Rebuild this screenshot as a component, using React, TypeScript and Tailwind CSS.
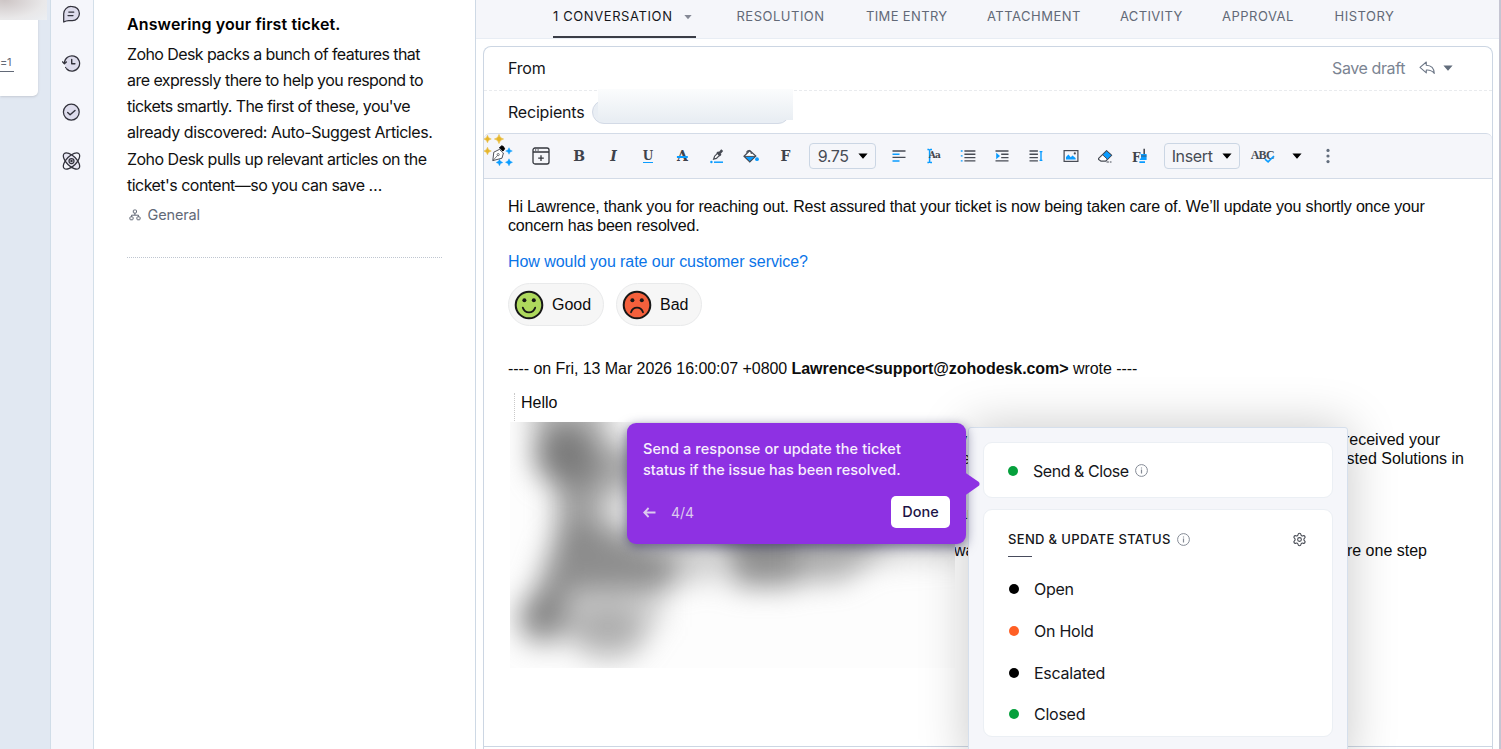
import type { ReactNode } from 'react';
import { clsx } from 'clsx';
import { Settings } from 'lucide-react';

const UI = 'font-[Inter,"Noto_Sans",sans-serif]';
const MAIL = 'font-["Liberation_Sans",Arial,sans-serif]';
const SLAB = 'font-["DejaVu_Serif",serif] font-bold text-[#3f434b]';

const tabs = [
  { label: 'RESOLUTION', className: 'w-[129.5px]' },
  { label: 'TIME ENTRY', className: 'w-[121px] tracking-[0.35px]' },
  { label: 'ATTACHMENT', className: 'w-[133px]' },
  { label: 'ACTIVITY', className: 'w-[102px] tracking-[0.35px]' },
  { label: 'APPROVAL', className: 'w-[112.5px]' },
  { label: 'HISTORY', className: 'w-[80px]' },
];

const articleLines = [
  { text: 'Zoho Desk packs a bunch of features that', className: 'tracking-[-0.59px]' },
  { text: 'are expressly there to help you respond to', className: 'tracking-[-0.54px]' },
  { text: "tickets smartly. The first of these, you've", className: 'tracking-[-0.57px]' },
  { text: 'already discovered: Auto-Suggest Articles.', className: 'tracking-[-0.45px]' },
  { text: 'Zoho Desk pulls up relevant articles on the', className: 'tracking-[-0.52px]' },
  { text: "ticket's content—so you can save …", className: 'tracking-[-0.53px]' },
];

const statuses = [
  { label: 'Open', dot: 'bg-black' },
  { label: 'On Hold', dot: 'bg-[#ff5f25]' },
  { label: 'Escalated', dot: 'bg-black' },
  { label: 'Closed', dot: 'bg-[#05a03c]' },
];

function Caret({ className }: { className?: string }) {
  return (
    <svg width="10" height="6" viewBox="0 0 10 6" className={clsx('shrink-0', className)}>
      <path d="M.4.5h9.2L5.5 5.3a.6.6 0 0 1-1 0z" fill="currentColor" />
    </svg>
  );
}

function InfoIcon() {
  return (
    <svg width="13" height="13" viewBox="0 0 13 13" fill="none" stroke="#858b96">
      <circle cx="6.5" cy="6.5" r="5.9" />
      <path d="M6.5 5.6v3.8M6.5 3.4v1.2" strokeWidth="1.2" />
    </svg>
  );
}

function RailIcon({ children }: { children: ReactNode }) {
  return (
    <svg
      width="19"
      height="19"
      viewBox="0 0 19 19"
      fill="none"
      stroke="#32323c"
      strokeWidth="1.25"
      strokeLinecap="round"
      strokeLinejoin="round"
    >
      {children}
    </svg>
  );
}

function SideRail() {
  return (
    <nav className="flex w-[43px] shrink-0 flex-col items-center gap-[30px] border-r border-[#d3dfe9] bg-[#f5f6fb] pr-[2px] pt-[4.5px]">
      <RailIcon>
        <path d="M1.7 17V8.8A7.4 7.4 0 0 1 9.2 1.5h1.2a7 7 0 0 1 0 14H6.6c-1.9 0-3.2.5-4.9 1.5z" fill="#dddcec" />
        <path d="M6.8 7.1h5M6 10.5h5" />
      </RailIcon>
      <RailIcon>
        <path d="M2.4 9.3a7.6 7.6 0 1 1 2.1 5.4" fill="#dddcec" />
        <path d="M.5 7.8l1.9 2 2-1.8" />
        <path d="M9.7 5.4v4.4h3.2" strokeWidth="1.4" />
        <path d="M3.6 13.4l.1.1M5.6 15.6l.1.1" />
      </RailIcon>
      <RailIcon>
        <circle cx="9.3" cy="9.1" r="7.9" fill="#dddcec" />
        <path d="M5.7 9.5l2.4 2.3 4.9-4.4" strokeWidth="1.4" />
      </RailIcon>
      <RailIcon>
        <ellipse cx="9.5" cy="9" rx="10.4" ry="5" transform="rotate(45 9.5 9)" fill="#dddcec" fillOpacity=".6" />
        <ellipse cx="9.5" cy="9" rx="10.4" ry="5" transform="rotate(-45 9.5 9)" />
        <circle cx="9.5" cy="9" r="2.5" />
        <circle cx="9.5" cy="9" r=".6" />
      </RailIcon>
    </nav>
  );
}

function ArticlePanel() {
  return (
    <section className="w-[381px] shrink-0 bg-white pl-[33px] pt-[11px]">
      <h2 className="h-[26px] whitespace-nowrap text-[16px] font-semibold leading-[26px] tracking-[0.13px] text-black">
        Answering your first ticket.
      </h2>
      <div className="mt-[4px] whitespace-nowrap text-[16px] leading-[26.15px] text-[#111]">
        {articleLines.map((line) => (
          <p key={line.text} className={line.className}>
            {line.text}
          </p>
        ))}
      </div>
      <div className="mt-[5.2px] flex h-6 items-center gap-[6.5px] pl-[2px] text-[#626977]">
        <svg width="12" height="12" viewBox="0 0 12 12" fill="none" stroke="currentColor">
          <rect x="4.3" y="1" width="3.2" height="3" rx=".8" />
          <rect x=".9" y="7.8" width="3.2" height="3" rx=".8" />
          <rect x="7.9" y="7.8" width="3.2" height="3" rx=".8" />
          <path d="M5.9 4v2.2M2.5 7.8V6.2h7v1.6" />
        </svg>
        <span className="text-[14.5px] tracking-[-0.15px]">General</span>
      </div>
      <div className="mt-[30px] w-[315px] border-t border-dotted border-[#bfc6d0]" />
    </section>
  );
}

function TabBar() {
  return (
    <header className="flex h-[39px] shrink-0 border-b-[1.5px] border-[#e8edf4] bg-[#f5f6fa] pl-[77px] text-[13px] tracking-[0.5px] text-[#626977]">
      <div className="mr-[40.5px] flex h-[38px] w-[143px] items-center justify-between border-b-2 border-[#3a3d46] pb-[3px] pr-[4px] text-[#15161a]">
        <span className="whitespace-nowrap tracking-[0.6px]">1 CONVERSATION</span>
        <Caret className="w-[8px] text-[#858995]" />
      </div>
      {tabs.map((tab) => (
        <span key={tab.label} className={clsx('flex h-[33px] items-center whitespace-nowrap', tab.className)}>
          {tab.label}
        </span>
      ))}
    </header>
  );
}

function Tool({ children }: { children: ReactNode }) {
  return <span className="flex w-[34.4px] shrink-0 items-center justify-center">{children}</span>;
}

function ToolSvg({ children }: { children: ReactNode }) {
  return (
    <svg width="16" height="16" viewBox="0 0 16 16" fill="none" stroke="#474b54" strokeWidth="1.4">
      {children}
    </svg>
  );
}

function Star({ x, y, r, fill }: { x: number; y: number; r: number; fill: string }) {
  return (
    <path
      transform={`translate(${x} ${y}) scale(${r})`}
      d="M0-1Q.15-.15 1 0Q.15.15 0 1Q-.15.15-1 0Q-.15-.15 0-1z"
      fill={fill}
      stroke={fill}
      strokeWidth=".12"
    />
  );
}

function SparklePen() {
  return (
    <svg width="30" height="34" viewBox="0 0 30 34" className="shrink-0 self-start">
      <Star x={3.5} y={5} r={3.8} fill="#e6b62c" />
      <Star x={15} y={5} r={4.6} fill="#e6b62c" />
      <Star x={3.5} y={17} r={3.8} fill="#e6b62c" />
      <Star x={25} y={17} r={3.3} fill="#0a9cff" />
      <Star x={15.5} y={28.5} r={3.3} fill="#0a9cff" />
      <Star x={25} y={28.3} r={3.5} fill="#0a9cff" />
      <path d="M8.8 26.6l1-8.4 5.6-2.8 4 3.6-1.4 5.2z" fill="#fff" stroke="#3c4048" strokeWidth=".9" />
      <path d="M9 26.4l4.6-5" stroke="#3c4048" strokeWidth=".7" />
      <circle cx="14.2" cy="20.6" r="1.1" fill="#fff" stroke="#3c4048" strokeWidth=".7" />
      <path d="M15.4 13.8l2.4-2 1.6.8 1.2 2.2-1.6 2.2z" fill="#000" stroke="#000" />
    </svg>
  );
}

function Toolbar() {
  return (
    <div className="flex h-[46px] shrink-0 items-stretch rounded-t-[6px] border-y border-[#d3dbe7] bg-[#f5f6fa]">
      <SparklePen />
      <span className="ml-[9.5px] mr-[3.5px] flex w-[35px] items-center justify-center">
        <svg width="18" height="18" viewBox="0 0 18 18" fill="none" stroke="#33363d" strokeWidth="1.3">
          <rect x="1" y="1" width="16" height="16" rx="2" />
          <path d="M1 5h16M9 8.3v5.6M6.2 11.1h5.6" />
          <path d="M3.2 3h1M5.6 3h1" />
        </svg>
      </span>
      <Tool>
        <span className={clsx(SLAB, 'text-[14px]')}>B</span>
      </Tool>
      <Tool>
        <span className={clsx(SLAB, 'text-[14px] italic')}>I</span>
      </Tool>
      <Tool>
        <span className={clsx(SLAB, 'border-b-[1.5px] border-[#0a9cff] text-[12px] leading-[12px]')}>U</span>
      </Tool>
      <Tool>
        <span className={clsx(SLAB, 'text-[14px] line-through decoration-[#0a9cff] decoration-2')}>A</span>
      </Tool>
      <Tool>
        <ToolSvg>
          <path d="M4.6 11.2l1-3 3.4-3.4 2 2-3.6 3.6z" fill="#fff" strokeWidth="1.2" />
          <path d="M8.2 4.2l3.4 3.4M10.2 5.6l3-3.4" strokeWidth="2.6" />
          <path d="M5 14.2h9" stroke="#0a9cff" strokeWidth="1.5" />
          <circle cx="2.4" cy="14" r="1.2" fill="#0a9cff" stroke="none" />
        </ToolSvg>
      </Tool>
      <Tool>
        <ToolSvg>
          <path d="M1 8.2l5.8-5.6 6 5.4-6 5.8z" fill="#fff" strokeWidth="1.2" />
          <path d="M1.4 8.4h11l-5.6 5.2z" fill="#0a9cff" strokeWidth="1" />
          <path d="M3.4 4.6c1.6-3 4.8-2.4 5 1.4" strokeWidth="1.1" />
          <circle cx="14" cy="11.2" r="1.9" fill="#0a9cff" stroke="none" />
        </ToolSvg>
      </Tool>
      <Tool>
        <span className={clsx(SLAB, 'text-[14px]')}>F</span>
      </Tool>
      <span className="ml-[6px] mr-[6px] flex h-[26px] w-[67px] shrink-0 items-center justify-between self-center rounded-[4px] border border-[#cbd6e4] pl-[8px] pr-[7px] text-[16px] tracking-[-0.4px] text-[#474b54]">
        9.75
        <Caret className="text-black" />
      </span>
      <Tool>
        <ToolSvg>
          <path d="M1.5 3h13M1.5 9.4h13" />
          <path d="M1.5 6.2h7M1.5 13h7" stroke="#0a9cff" />
        </ToolSvg>
      </Tool>
      <Tool>
        <span className="flex items-center">
          <svg width="5" height="16" viewBox="0 0 5 16" fill="none" stroke="#0a9cff" strokeWidth="1.5">
            <path d="M.4 1.5h1.2l1 .8 1-.8H5M2.6 2v12M.4 14.5h1.2l1-.8 1 .8H5" />
          </svg>
          <span className={clsx(SLAB, '-ml-[3px] text-[9px] tracking-[-0.9px]')}>Aa</span>
        </span>
      </Tool>
      <Tool>
        <ToolSvg>
          <path d="M4.4 3h11M4.4 6.3h11M4.4 9.6h11M4.4 12.9h11" />
          <path d="M.8 3h1.8M.8 7.9h1.8M.8 12.9h1.8" stroke="#0a9cff" />
        </ToolSvg>
      </Tool>
      <Tool>
        <ToolSvg>
          <path d="M1.5 3h13M7.2 6.3h7.3M7.2 9.6h7.3M1.5 12.9h13" />
          <path d="M2.2 4.8L6 8 2.2 11.2z" fill="#0a9cff" stroke="none" />
        </ToolSvg>
      </Tool>
      <Tool>
        <ToolSvg>
          <path d="M1.5 3h8.4M1.5 6.3h8.4M1.5 9.6h8.4M1.5 12.9h8.4" />
          <path d="M13 3.2v9.6M11.6 3.6h2.8M11.6 12.4h2.8" stroke="#0a9cff" />
        </ToolSvg>
      </Tool>
      <Tool>
        <ToolSvg>
          <rect x="1.1" y="2.6" width="13.8" height="10.8" strokeWidth="1.2" />
          <path d="M3 11.5V9l2.4-2.6 2.4 2.8 1.6-1.6L12.6 10v1.5z" fill="#0a9cff" stroke="none" />
          <circle cx="11.8" cy="5.4" r="1.1" fill="#474b54" stroke="none" />
        </ToolSvg>
      </Tool>
      <Tool>
        <ToolSvg>
          <path d="M1.6 10.4l7.9-7.6 5 4.4-5.8 6H4l-2.4-1.8z" fill="#fff" strokeWidth="1.2" />
          <path d="M5.6 6.8l4-4 5 4.4-4 4.2z" fill="#0a9cff" strokeWidth="1" />
          <path d="M9.5 14h5" strokeDasharray="2.4 .9" strokeWidth="1.2" />
        </ToolSvg>
      </Tool>
      <Tool>
        <span className="flex items-center">
          <span className={clsx(SLAB, 'mt-[4px] text-[12px] leading-none')}>F</span>
          <svg width="8" height="16" viewBox="0 0 8 16" className="-ml-[1px]">
            <path d="M4.4.8H6V6H4.4z" fill="#474b54" />
            <path d="M2 6h5.6v6H.8v-1.4L2 10.4zM.4 13.2H6v1.8H.4z" fill="#0a9cff" />
            <path d="M2 8h5.6" stroke="#474b54" strokeWidth=".8" />
          </svg>
        </span>
      </Tool>
      <span className="ml-[6.8px] flex h-[26px] w-[76px] shrink-0 items-center justify-between self-center rounded-[4px] border border-[#cbd6e4] pl-[7px] pr-[7px] text-[16px] tracking-[-0.35px] text-[#474b54]">
        Insert
        <Caret className="text-black" />
      </span>
      <span className="relative ml-[11px] flex w-[25px] shrink-0 items-center">
        <span className='-mt-[3px] font-["Liberation_Serif",serif] text-[12px] font-bold tracking-[-0.7px] text-[#474b54]'>
          ABC
        </span>
        <svg width="11" height="8" viewBox="0 0 11 8" className="absolute left-[13.5px] top-[20.5px]">
          <path d="M1 4.2l3.1 2.6L10 1" fill="none" stroke="#0a9cff" strokeWidth="1.6" />
        </svg>
      </span>
      <Caret className="ml-[16px] self-center text-black" />
      <svg width="4" height="16" viewBox="0 0 4 16" className="ml-[24.5px] self-center" fill="#626d7c">
        <circle cx="2" cy="2.4" r="1.6" />
        <circle cx="2" cy="8" r="1.6" />
        <circle cx="2" cy="13.6" r="1.6" />
      </svg>
    </div>
  );
}

function Face({ good }: { good: boolean }) {
  return (
    <svg width="30" height="30" viewBox="0 0 30 30" stroke="#171717" strokeLinecap="round">
      <circle cx="15" cy="15" r="13.3" fill={good ? '#aed95d' : '#f4603c'} strokeWidth="2" />
      <circle cx="10.4" cy="10.2" r="2" fill="#171717" stroke="none" />
      <circle cx="19.8" cy="10.2" r="2" fill="#171717" stroke="none" />
      <path
        d={good ? 'M8.8 17.6c2.2 6.4 10.2 6.4 12.4 0' : 'M9 22.2c2.2-6 9.8-6 12 0'}
        fill="none"
        strokeWidth="1.8"
      />
    </svg>
  );
}

function RatingButton({ label, good }: { label: string; good: boolean }) {
  return (
    <button
      className={clsx(
        'flex h-[43px] items-center gap-[8px] rounded-full border border-[#e9eaeb] bg-[#f6f6f6] pl-[5px] text-[16px]',
        good ? 'w-[96px]' : 'w-[86px]',
      )}
    >
      <Face good={good} />
      {label}
    </button>
  );
}

// Redacted part of the quoted mail.
function RedactedBlock() {
  return (
    <svg width="445" height="246" viewBox="0 0 445 246" className="absolute left-[26px] top-[243px]">
      <defs>
        <filter id="smudge" x="-20%" y="-20%" width="140%" height="140%" colorInterpolationFilters="sRGB">
          <feGaussianBlur stdDeviation="14" />
        </filter>
      </defs>
      <rect width="445" height="246" fill="#fdfdfd" />
      <g filter="url(#smudge)" fill="#7c7c7c">
        <ellipse cx="56" cy="32" rx="32" ry="32" />
        <path d="M16-30h84v50H26z" fillOpacity=".5" />
        <path d="M46 40h46v85H46z" fillOpacity=".75" />
        <path d="M85 22h110v45H85z" fillOpacity=".65" />
        <path d="M92 60h90v60H92z" fillOpacity=".2" />
        <path d="M48 108h60l56 26v32l-104 2-20 40H12z" fillOpacity=".85" />
        <ellipse cx="34" cy="196" rx="26" ry="26" fillOpacity=".75" />
        <ellipse cx="98" cy="212" rx="38" ry="24" fillOpacity=".55" />
        <path d="M56 150h95v55H50z" fillOpacity=".36" />
        <path d="M205 80h80v84h-60z" fillOpacity=".85" />
        <path d="M280 80h90v55l-40 24h-50z" fillOpacity=".62" />
        <path d="M360 70h110v65l-100 5z" fillOpacity=".3" />
        <path d="M150 60h60v100h-60z" fillOpacity=".35" />
      </g>
    </svg>
  );
}

function MailBody() {
  return (
    <div className={clsx(MAIL, 'relative h-[567px] shrink-0 whitespace-nowrap pl-[24px] pt-[18px] text-[16px] leading-[19px] text-[#0c0c0c]')}>
      <p className="tracking-[-0.16px]">
        Hi Lawrence, thank you for reaching out. Rest assured that your ticket is now being taken care of. We’ll update
        you shortly once your
      </p>
      <p className="tracking-[-0.2px]">concern has been resolved.</p>
      <p className="mt-[17px] tracking-[-0.06px] text-[#0a74e8]">How would you rate our customer service?</p>
      <div className="mt-[12px] flex gap-[12px]">
        <RatingButton label="Good" good />
        <RatingButton label="Bad" good={false} />
      </div>
      <p className="mt-[33px] tracking-[-0.06px]">
        ---- on Fri, 13 Mar 2026 16:00:07 +0800 <b>Lawrence&lt;support@zohodesk.com&gt;</b> wrote ----
      </p>
      <div className="ml-[6px] mt-[15px] h-[30px] border-l border-dotted border-[#c9c9c9] pl-[6px]">Hello</div>
      <div className="flex justify-between pl-[451px] pr-[52px] pt-[7px]">
        <span>y</span>
        <span>received your</span>
      </div>
      <div className="flex justify-between pl-[449px] pr-[28px]">
        <span>te</span>
        <span>sted Solutions in</span>
      </div>
      <div className="pl-[450px] pt-[36px]">an</div>
      <div className="flex justify-between pl-[446px] pr-[65px] pt-[18px]">
        <span>was</span>
        <span>re one step</span>
      </div>
      <RedactedBlock />
    </div>
  );
}

function Editor() {
  return (
    <section className="ml-[7px] mt-[7px] flex h-[720px] w-[1010px] flex-col rounded-t-[8px] border-x border-t border-[#ccd6e3] bg-white">
      <div className="flex h-[44px] shrink-0 items-center border-b border-dashed border-[#e9ebee] pb-px pl-[24px] pr-[39px] text-[16px] tracking-[-0.2px] text-[#15161a]">
        <span className="grow">From</span>
        <span className="text-[16px] tracking-[-0.4px] text-[#7b8492]">Save draft</span>
        <svg width="17" height="14" viewBox="0 0 17 14" fill="none" stroke="#6c7686" strokeWidth="1.1" className="ml-[14px]">
          <path d="M7.3 1L1 6.4l6.3 5.4V9c3.6-.2 6 .8 8 3.4-.2-5-3-8-8-8.2z" strokeLinejoin="round" />
        </svg>
        <Caret className="ml-[7px] text-[#626d7c]" />
      </div>
      <div className="flex h-[42px] shrink-0 items-center pl-[24px] text-[16px] tracking-[-0.2px] text-[#15161a]">
        <span className="w-[84px]">Recipients</span>
        <span className="relative h-[24px] w-[198px] rounded-full border border-[#d3dae6] bg-[#e9eef4]">
          <span className="absolute -top-[12px] left-[5px] h-[31px] w-[195px] bg-linear-to-b from-[#fbfcfd] to-[#e9eef3]" />
        </span>
      </div>
      <Toolbar />
      <MailBody />
      <div className="border-t border-[#ccd6e3]" />
    </section>
  );
}

function SendMenu() {
  return (
    <div className="absolute left-[968px] top-[427px] flex h-[340px] w-[380px] flex-col gap-[11px] rounded-t-[3px] border border-[#d5dfec] bg-[#f5f6fa] px-[14px] pt-[14px] text-[16px] tracking-[-0.25px] text-[#15161a] shadow-[0_0_50px_rgba(0,0,0,0.22)]">
      <div className="flex h-[56px] shrink-0 items-center rounded-[9px] border border-[#ebeff4] bg-white pl-[24px] pt-px">
        <span className="size-[10px] rounded-full bg-[#05a03c]" />
        <span className="ml-[15px] mr-[6px] tracking-[-0.45px]">Send &amp; Close</span>
        <InfoIcon />
      </div>
      <div className="h-[228px] shrink-0 rounded-[9px] border border-[#ebeff4] bg-white pl-[24px] pr-[25px] pt-[20px]">
        <div className="flex h-[19px] items-center">
          <span className="mr-[6px] text-[13px] font-medium tracking-[0.34px]">SEND &amp; UPDATE STATUS</span>
          <InfoIcon />
          <Settings size={15} strokeWidth={1.7} className="ml-auto text-[#474b54]" />
        </div>
        <div className="mt-[7px] w-[24px] border-t border-[#474b5c]" />
        <ul className="mt-[11.3px]">
          {statuses.map((status) => (
            <li key={status.label} className="flex h-[41.7px] items-center gap-[15px] pl-px">
              <span className={clsx('size-[10px] rounded-full', status.dot)} />
              {status.label}
            </li>
          ))}
        </ul>
      </div>
    </div>
  );
}

function TourTooltip() {
  return (
    <div className="absolute left-[627px] top-[422.5px] h-[121px] w-[339px] rounded-[9px] bg-[#8e31e3] pl-4 pr-4 pt-[15px] text-[#f7effd] shadow-[0_3px_12px_rgba(35,35,85,0.6)]">
      <p className="whitespace-nowrap text-[14.5px] font-medium leading-[21px] tracking-[0.1px]">
        Send a response or update the ticket
      </p>
      <p className="whitespace-nowrap text-[14.5px] font-medium leading-[21px] tracking-[0.01px]">
        status if the issue has been resolved.
      </p>
      <div className="mt-[16.5px] flex h-[32px] items-center text-[14px] text-[#dccbee]">
        <svg width="13" height="11" viewBox="0 0 13 11" fill="none" stroke="currentColor" strokeWidth="1.8">
          <path d="M12.5 5.5H1.2M5.6 1L1.2 5.5 5.6 10" />
        </svg>
        <span className="ml-[15px] grow">4/4</span>
        <span className="flex h-[32px] w-[59px] items-center justify-center rounded-[5px] bg-white text-[14.5px] font-medium text-[#1d1346]">
          Done
        </span>
      </div>
      <svg width="16" height="26" viewBox="0 0 16 26" className="absolute -right-[14.5px] top-[48px]">
        <path d="M0 1.4l13.5 9.4a2.6 2.6 0 0 1 0 4.2L0 24.4z" fill="#8e31e3" />
      </svg>
    </div>
  );
}

export default function App() {
  return (
    <div className={clsx(UI, 'relative flex h-[749px] w-[1501px] overflow-hidden bg-white')}>
      <aside className="w-[51px] shrink-0 border-r border-[#d0dde8] bg-[#e1e8f2]">
        <div className="relative h-[96px] w-[38px] rounded-br-[5px] bg-white pt-[54px] shadow-sm">
          <div className="absolute left-0 top-0 h-[20px] w-[47px] bg-[radial-gradient(ellipse_at_10%_0%,#cdc5c5,#e9e8e9_65%,#eceff3)]" />
          <span className="block w-[14px] whitespace-nowrap border-b border-[#626977] text-[11px] leading-[17px] tracking-[-0.2px] text-[#626977]">
            =1
          </span>
        </div>
      </aside>
      <SideRail />
      <ArticlePanel />
      <main className="flex grow flex-col border-l border-r-2 border-l-[#ced9e5] border-r-[#c5c5d2]">
        <TabBar />
        <Editor />
      </main>
      <SendMenu />
      <TourTooltip />
    </div>
  );
}
